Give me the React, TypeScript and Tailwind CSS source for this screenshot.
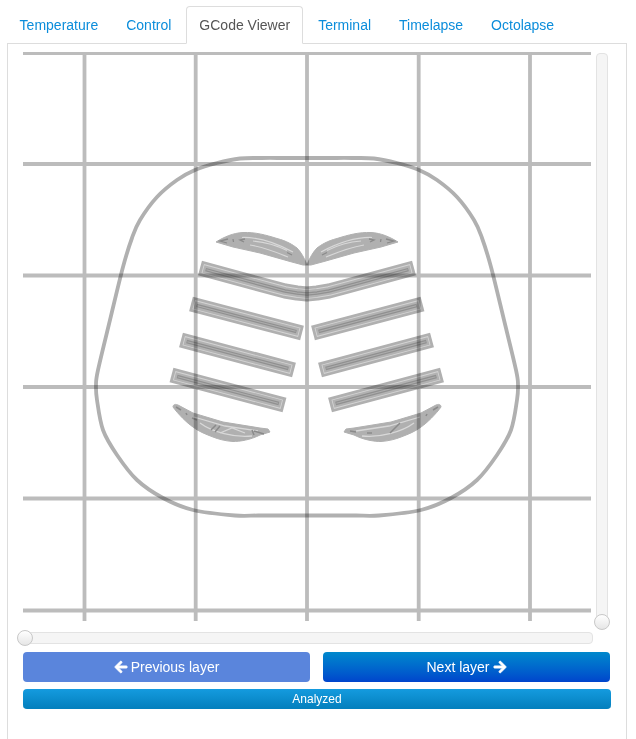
import { FaArrowLeft, FaArrowRight } from "react-icons/fa";

type Pt = [number, number];

function inset(points: Pt[], d: number): string {
  const p = points.map((q) => [...q] as Pt);
  const move = (a: Pt, b: Pt): Pt => {
    const dx = b[0] - a[0];
    const dy = b[1] - a[1];
    const l = Math.hypot(dx, dy);
    return [a[0] + (dx / l) * d, a[1] + (dy / l) * d];
  };
  const n = p.length;
  p[0] = move(points[0], points[1]);
  p[n - 1] = move(points[n - 1], points[n - 2]);
  return p.map((q) => q.join(",")).join(" ");
}

function smoothClosed(pts: Pt[]): string {
  const n = pts.length;
  let d = `M${pts[0][0]} ${pts[0][1]}`;
  for (let i = 0; i < n; i++) {
    const p0 = pts[(i - 1 + n) % n];
    const p1 = pts[i];
    const p2 = pts[(i + 1) % n];
    const p3 = pts[(i + 2) % n];
    const c1x = p1[0] + (p2[0] - p0[0]) / 6;
    const c1y = p1[1] + (p2[1] - p0[1]) / 6;
    const c2x = p2[0] - (p3[0] - p1[0]) / 6;
    const c2y = p2[1] - (p3[1] - p1[1]) / 6;
    d += ` C${c1x} ${c1y} ${c2x} ${c2y} ${p2[0]} ${p2[1]}`;
  }
  return d + " Z";
}

const outlineLeft: Pt[] = [
  [307, 158], [285, 158], [262, 158], [240, 158.5], [217, 163], [195, 170], [177, 180], [157, 197], [140, 220], [132, 238], [123, 267],
  [110, 320], [98, 370], [96, 385], [97, 400], [103, 430], [117, 455], [137, 480], [163, 498], [193, 510], [235, 515.5], [258, 515.5], [282, 515.5], [307, 515.5],
];
const outline: Pt[] = [
  ...outlineLeft,
  ...outlineLeft.slice(1, -1).reverse().map(([x, y]) => [614 - x, y] as Pt),
];

const layers: [number, number, string][] = [
  [15, 0, "#b0b0b0"],
  [9.6, 2.8, "#d4d4d4"],
  [7.8, 3.6, "#b2b2b2"],
  [3.4, 5.8, "#909090"],
  [1.1, 6.6, "#adadad"],
];

function Bar({ points }: { points: Pt[] }) {
  return (
    <g>
      {layers.map(([w, d, c]) => (
        <polyline
          key={w}
          points={inset(points, d)}
          fill="none"
          stroke={c}
          strokeWidth={w}
          strokeLinejoin="round"
        />
      ))}
    </g>
  );
}

const bars: Pt[][] = [
  [[200, 268], [270, 287], [285, 291], [297, 293], [307, 294], [317, 293], [329, 291], [344, 287], [414, 268]],
  [[191, 304], [302, 333]],
  [[313, 333], [422.5, 304]],
  [[181, 340], [294, 370]],
  [[320, 370], [432, 340]],
  [[171.5, 375], [284.5, 405]],
  [[330, 405], [442, 375]],
];

function TopWing() {
  return (
    <g>
      <path
        d="M216 242 C224 237 233 233 243 232.5 C255 232 266 235 277 238.5 C287 241 293 245 297 248 C301 252 305 259 307 265 L303 265 L290 261.5 L260 253 L233 247 Z"
        fill="#b0b0b0"
        stroke="#b0b0b0"
        strokeWidth="1"
        strokeLinejoin="round"
      />
      <path
        d="M242 237.5 C258 237 278 244 293 252 M253 241 C266 242 278 246 287 250.5 M250 245 C262 247 276 252 288 257"
        fill="none"
        stroke="#d8d8d8"
        strokeWidth="1.2"
      />
      <path
        d="M228 239 L220 241 L227 243 M233 239 L233.5 242 M245 239 L240 240 L244 242 M287 252.5 L292 255"
        fill="none"
        stroke="#8a8a8a"
        strokeWidth="1.3"
      />
    </g>
  );
}

function App() {
  const tabs = ["Temperature", "Control", "GCode Viewer", "Terminal", "Timelapse", "Octolapse"];
  return (
    <div className="h-[739px] overflow-hidden bg-white pt-1.5 px-[7px] font-['Liberation_Sans',sans-serif] text-sm text-[#333]">
      <ul className="relative z-10 -mb-px -ml-[0.4px] flex list-none">
        {tabs.map((t) =>
          t === "GCode Viewer" ? (
            <li
              key={t}
              className="mr-0.5 rounded-t border border-[#ddd] border-b-white bg-white px-3 py-2 leading-5 text-[#555]"
            >
              {t}
            </li>
          ) : (
            <li key={t} className="mr-0.5 border border-transparent px-3 py-2 leading-5 text-[#0b8ddb]">
              {t}
            </li>
          )
        )}
      </ul>
      <div className="h-[700px] w-[620px] border border-[#ddd] pt-2 pl-[15px]">
        <div className="flex">
          <svg width="568" height="569" viewBox="23 52 568 569" className="block shrink-0">
            <g stroke="#bcbcbc" strokeWidth="3.8" fill="none">
              {[53, 164, 275.5, 387, 498.5, 610.5].map((y) => (
                <line key={y} x1="23" x2="591" y1={y} y2={y} />
              ))}
              {[84.5, 195.7, 307, 418.7, 530].map((x) => (
                <line key={x} x1={x} x2={x} y1="52" y2="621" />
              ))}
            </g>
            <g className="mix-blend-multiply">
              <path d={smoothClosed(outline)} fill="none" stroke="#b0b0b0" strokeWidth="3.8" />
            </g>
            <g className="mix-blend-multiply">
              {bars.map((b, i) => (
                <Bar key={i} points={b} />
              ))}
            </g>
            <g className="mix-blend-multiply">
              <TopWing />
            </g>
            <g className="mix-blend-multiply" transform="translate(614 0) scale(-1 1)">
              <TopWing />
            </g>
            <g className="mix-blend-multiply">
              <path
                d="M173 407 C173 404 176 404 178 405 L193 413 L223 422 L260 428 L268 429 L270 432 L260 435 C250 440 240 441.5 233 441.5 C225 441 218 439 213 437 C205 434 198 431 193 427 C187 423 178 414 173 407 Z"
                fill="#b0b0b0"
                stroke="#b0b0b0"
                strokeWidth="1"
                strokeLinejoin="round"
              />
              <path
                d="M194 417 L225 426 L258 431 M200 423 C212 432 235 438 252 436 M220 433 L232 428 L245 433"
                fill="none"
                stroke="#d8d8d8"
                strokeWidth="1.3"
              />
              <path
                d="M176 407 L181 410 M186 413 L187 415 M192 418 L197 420 M211 430 L216 425 M215 432 L220 426 M252 430 L254 435 M254 431 L264 434"
                fill="none"
                stroke="#8a8a8a"
                strokeWidth="1.5"
              />
            </g>
            <g className="mix-blend-multiply">
              <path
                d="M441 407 C441 404 438 404 436 405 L421 413 L391 422 L354 428 L346 429 L344 432 L354 435 C364 440 374 441.5 381 441.5 C389 441 396 439 401 437 C409 434 416 431 421 427 C427 423 436 414 441 407 Z"
                fill="#b0b0b0"
                stroke="#b0b0b0"
                strokeWidth="1"
                strokeLinejoin="round"
              />
              <path
                d="M420 417 L389 426 L356 431 M414 423 C402 432 379 438 362 436"
                fill="none"
                stroke="#d8d8d8"
                strokeWidth="1.3"
              />
              <path
                d="M438 407 L433 410 M427 414 L426 416 M400 423 L390 433 M350 431 L356 432 M367 433 L372 433"
                fill="none"
                stroke="#8a8a8a"
                strokeWidth="1.5"
              />
            </g>
          </svg>
          <div className="relative ml-[5px] mt-px h-[570px] w-3 rounded border border-[#e3e3e3] bg-[#f5f5f5]">
            <div className="absolute left-[-3px] top-[560px] h-4 w-4 rounded-full border border-[#c8c8c8] bg-gradient-to-b from-white to-[#e6e6e6]" />
          </div>
        </div>
        <div className="relative mt-[9px] ml-0.5 h-3 w-[568px] rounded border border-[#e3e3e3] bg-[#f5f5f5]">
          <div className="absolute left-[-9px] top-[-3px] h-4 w-4 rounded-full border border-[#c8c8c8] bg-gradient-to-b from-white to-[#e6e6e6]" />
        </div>
        <div className="mt-2 flex w-[587px] gap-[13px]">
          <button className="flex h-[30px] flex-1 items-center justify-center gap-[3px] rounded bg-[#5a85dc] leading-5 text-white">
            <FaArrowLeft className="text-[14px]" stroke="currentColor" strokeWidth={30} />
            Previous layer
          </button>
          <button className="flex h-[30px] flex-1 items-center justify-center gap-[3px] rounded bg-gradient-to-b from-[#0088cc] to-[#0044cc] leading-5 text-white">
            Next layer
            <FaArrowRight className="text-[14px]" stroke="currentColor" strokeWidth={30} />
          </button>
        </div>
        <div className="mt-[7px] flex h-5 w-[588px] items-center justify-center rounded border-b border-[#0480be] bg-gradient-to-b from-[#149bdf] to-[#0480be] text-xs text-white">
          Analyzed
        </div>
      </div>
    </div>
  );
}

export default App;
